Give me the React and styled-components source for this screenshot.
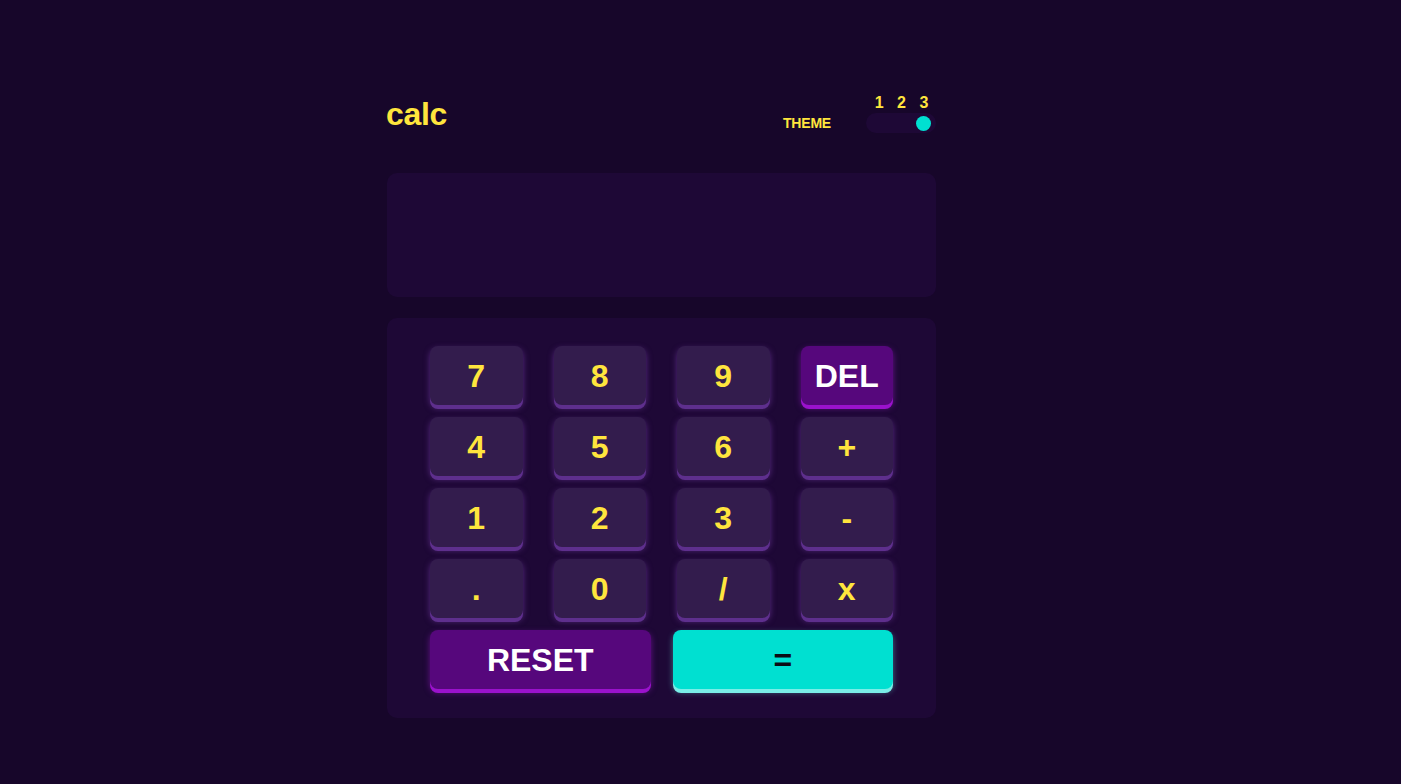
import React from 'react'
import styled, { createGlobalStyle } from 'styled-components'

const GlobalStyle = createGlobalStyle`
  html, body {
    margin: 0;
    padding: 0;
    background: #17062a;
  }
  body {
    font-family: "Liberation Sans", Arial, sans-serif;
    min-height: 100vh;
  }
`

const Page = styled.main`
  min-height: 784px;
  padding-top: 95px;
  box-sizing: border-box;
`

const Calculator = styled.div`
  width: 549px;
  margin-left: 387px;
`

const Header = styled.header`
  height: 38px;
  display: flex;
  justify-content: space-between;
  align-items: flex-start;
`

const Logo = styled.h1`
  margin: 3px 0 0 -1px;
  font-size: 32px;
  line-height: 32px;
  font-weight: 700;
  color: #ffe53d;
  letter-spacing: -0.3px;
`

const ThemeSwitch = styled.div`
  height: 100%;
  display: flex;
  align-items: flex-end;
  gap: 35px;
`

const ThemeLabel = styled.span`
  font-size: 14px;
  line-height: 14px;
  font-weight: 700;
  color: #ffe53d;
  margin-bottom: 3px;
  letter-spacing: -0.2px;
`

const SwitchColumn = styled.div`
  display: flex;
  flex-direction: column;
  width: 70px;
`

const Numbers = styled.div`
  display: grid;
  grid-template-columns: repeat(3, 1fr);
  padding: 0 1px 0 2px;
  font-size: 16px;
  line-height: 16px;
  font-weight: 700;
  color: #ffe53d;
  text-align: center;
`

const Track = styled.div`
  margin-top: 2px;
  height: 20px;
  border-radius: 10px;
  background: #1e0836;
  display: flex;
  justify-content: ${(p) => ['flex-start', 'center', 'flex-end'][p.pos]};
  align-items: center;
  padding: 0 5px;
  box-sizing: border-box;
`

const Knob = styled.span`
  width: 15px;
  height: 15px;
  border-radius: 50%;
  background: #00e0d1;
`

const Screen = styled.div`
  margin-top: 40px;
  height: 124px;
  border-radius: 10px;
  background: #1e0836;
`

const Keypad = styled.div`
  margin-top: 21px;
  padding: 28px 43px 29px;
  border-radius: 10px;
  background: #1e0836;
  display: flex;
  flex-direction: column;
  gap: 12px;
`

const KeyGrid = styled.div`
  display: grid;
  grid-template-columns: repeat(${(p) => p.cols}, 1fr);
  column-gap: ${(p) => p.gap}px;
  row-gap: 12px;
`

const tones = {
  plain: { bg: '#331c4d', shade: '#5e2f8d', glow: 'rgba(135, 70, 190, 0.55)', fg: '#ffe53d' },
  accent: { bg: '#56077c', shade: '#9a12cc', glow: 'rgba(170, 30, 220, 0.5)', fg: '#ffffff' },
  equal: { bg: '#00e0d1', shade: '#7aeee8', glow: 'rgba(110, 240, 235, 0.45)', fg: '#0c0c14' },
}

const Key = styled.button`
  height: 59px;
  border: none;
  border-radius: 8px;
  background: ${(p) => tones[p.tone].bg};
  color: ${(p) => tones[p.tone].fg};
  box-shadow: 0 4px 0 ${(p) => tones[p.tone].shade}, 0 3px 6px ${(p) => tones[p.tone].glow};
  font-family: "Liberation Sans", Arial, sans-serif;
  font-size: 32px;
  font-weight: 700;
  line-height: 1;
  padding: 0;
  cursor: pointer;
`

const rows = [
  ['7', '8', '9', 'DEL'],
  ['4', '5', '6', '+'],
  ['1', '2', '3', '-'],
  ['.', '0', '/', 'x'],
]

export default function App() {
  return (
    <>
      <GlobalStyle />
      <Page>
        <Calculator>
          <Header>
            <Logo>calc</Logo>
            <ThemeSwitch>
              <ThemeLabel>THEME</ThemeLabel>
              <SwitchColumn>
                <Numbers>
                  <span>1</span>
                  <span>2</span>
                  <span>3</span>
                </Numbers>
                <Track pos={2}>
                  <Knob />
                </Track>
              </SwitchColumn>
            </ThemeSwitch>
          </Header>
          <Screen />
          <Keypad>
            <KeyGrid cols={4} gap={31}>
              {rows.flat().map((k) => (
                <Key key={k} tone={k === 'DEL' ? 'accent' : 'plain'}>
                  {k}
                </Key>
              ))}
            </KeyGrid>
            <KeyGrid cols={2} gap={22}>
              <Key tone="accent">RESET</Key>
              <Key tone="equal">=</Key>
            </KeyGrid>
          </Keypad>
        </Calculator>
      </Page>
    </>
  )
}
